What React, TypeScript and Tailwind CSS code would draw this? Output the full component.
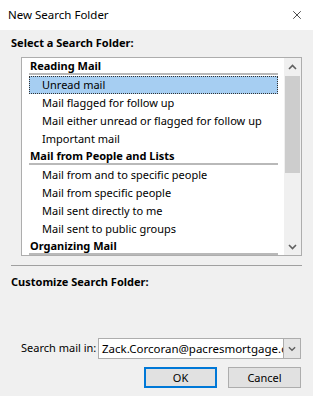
import { X } from "lucide-react";

type Item = { kind: "header" | "row"; label: string; selected?: boolean };

const ITEMS: Item[] = [
  { kind: "header", label: "Reading Mail" },
  { kind: "row", label: "Unread mail", selected: true },
  { kind: "row", label: "Mail flagged for follow up" },
  { kind: "row", label: "Mail either unread or flagged for follow up" },
  { kind: "row", label: "Important mail" },
  { kind: "header", label: "Mail from People and Lists" },
  { kind: "row", label: "Mail from and to specific people" },
  { kind: "row", label: "Mail from specific people" },
  { kind: "row", label: "Mail sent directly to me" },
  { kind: "row", label: "Mail sent to public groups" },
  { kind: "header", label: "Organizing Mail" },
];

function Chevron({ up = false, className = "" }: { up?: boolean; className?: string }) {
  return (
    <svg width="9" height="6" viewBox="0 0 9 6" className={className}>
      <path
        d={up ? "M1 5 L4.5 1.5 L8 5" : "M1 1 L4.5 4.5 L8 1"}
        fill="none"
        stroke="currentColor"
        strokeWidth="1.6"
      />
    </svg>
  );
}

function ListRow({ item }: { item: Item }) {
  if (item.kind === "header") {
    return (
      <div className="h-[18px] shrink-0">
        <div className="h-[15px] leading-[15px] pl-[1px] font-bold whitespace-nowrap">{item.label}</div>
        <div className="h-[2px] bg-[#b9b9b9]" />
      </div>
    );
  }
  return (
    <div
      className={
        "h-[18px] shrink-0 leading-[16px] pl-[12px] whitespace-nowrap " +
        (item.selected
          ? "bg-[#a6cef2] border border-dotted border-[#333]"
          : "border border-transparent")
      }
    >
      {item.label}
    </div>
  );
}

export default function App() {
  return (
    <div
      className="w-[313px] h-[396px] bg-[#f0f0f0] flex flex-col overflow-hidden text-[11px] text-black"
      style={{ fontFamily: '"Noto Sans", "Open Sans", sans-serif' }}
    >
      <header className="h-[30px] bg-white flex items-center justify-between pl-[8px] pr-[9px] shrink-0 text-[11.5px]">
        <span>New Search Folder</span>
        <X className="w-[14px] h-[14px]" strokeWidth={1.2} />
      </header>

      <div className="mt-[5px] ml-[11px] h-[16px] leading-[16px] font-bold">Select a Search Folder:</div>

      <div className="mt-[6px] ml-[21px] w-[281px] h-[199px] border border-[#adadad] bg-white flex shrink-0">
        <div className="flex-1 flex flex-col pl-[7px] pr-[6px] overflow-hidden">
          {ITEMS.map((item, i) => (
            <ListRow key={i} item={item} />
          ))}
        </div>
        <div className="w-[17px] bg-[#f0f0f0] flex flex-col">
          <div className="h-[17px] flex items-center justify-center text-[#606060]">
            <Chevron up />
          </div>
          <div className="flex-1 px-[1px] pt-[1px]">
            <div className="h-[97px] bg-[#cdcdcd]" />
          </div>
          <div className="h-[17px] flex items-center justify-center text-[#606060]">
            <Chevron />
          </div>
        </div>
      </div>

      <div className="mt-[9px] ml-[11px] w-[291px] h-px bg-[#a0a0a0]" />

      <div className="mt-[8px] ml-[11px] h-[16px] leading-[16px] font-bold">Customize Search Folder:</div>

      <div className="mt-[48px] ml-[21px] flex items-center h-[21px]">
        <span className="w-[77px] whitespace-nowrap">Search mail in:</span>
        <div className="w-[203px] h-[21px] border border-[#adadad] bg-white flex items-stretch">
          <div className="flex-1 overflow-hidden whitespace-nowrap leading-[19px] pl-[3px] text-[11.5px]">
            Zack.Corcoran@pacresmortgage.com
          </div>
          <div className="w-[17px] bg-[#e5e5e5] border-l border-[#adadad] flex items-center justify-center text-[#606060]">
            <Chevron className="w-[8px]" />
          </div>
        </div>
      </div>

      <div className="mt-[8px] flex justify-end gap-[11px] pr-[12px]">
        <button className="w-[73px] h-[21px] bg-[#e1e1e1] border-2 border-[#0078d7] leading-none">OK</button>
        <button className="w-[73px] h-[21px] bg-[#e1e1e1] border border-[#adadad] leading-none">Cancel</button>
      </div>
    </div>
  );
}
